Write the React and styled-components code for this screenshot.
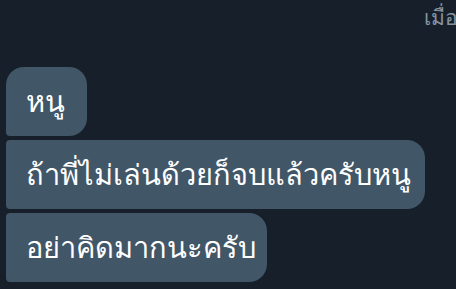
import React from 'react';
import styled, { createGlobalStyle } from 'styled-components';

const GlobalStyle = createGlobalStyle`
  html, body {
    margin: 0;
    padding: 0;
    background: #17202a;
  }
  body {
    width: 456px;
    height: 289px;
    overflow: hidden;
    font-family: "Noto Sans", "DejaVu Sans", sans-serif;
  }
`;

const Chat = styled.div`
  display: flex;
  flex-direction: column;
  width: 456px;
  height: 289px;
  overflow: hidden;
  box-sizing: border-box;
`;

const Header = styled.div`
  display: flex;
  height: 67px;
  padding-left: 424px;
  white-space: nowrap;
  overflow: hidden;
`;

const DateLabel = styled.span`
  color: #8794a0;
  font-size: 21px;
  line-height: 34px;
`;

const Group = styled.div`
  display: flex;
  flex-direction: column;
  align-items: flex-start;
  gap: 4px;
  padding-left: 6px;
`;

const Bubble = styled.div`
  background: #415768;
  color: #ffffff;
  font-size: 29px;
  height: 69px;
  display: flex;
  align-items: center;
  padding: 0 20px;
  box-sizing: border-box;
  white-space: nowrap;
  border-radius: ${p => (p.first ? '18px' : '4px')} 18px 18px 4px;
  width: ${p => p.w}px;
`;

const messages = [
  { text: 'หนู', w: 81 },
  { text: 'ถ้าพี่ไม่เล่นด้วยก็จบแล้วครับหนู', w: 419 },
  { text: 'อย่าคิดมากนะครับ', w: 261 }
];

export default function App() {
  return (
    <>
      <GlobalStyle />
      <Chat>
        <Header>
          <DateLabel>เมื่อวาน</DateLabel>
        </Header>
        <Group>
          {messages.map((m, i) => (
            <Bubble key={i} first={i === 0} w={m.w}>
              {m.text}
            </Bubble>
          ))}
        </Group>
      </Chat>
    </>
  );
}
